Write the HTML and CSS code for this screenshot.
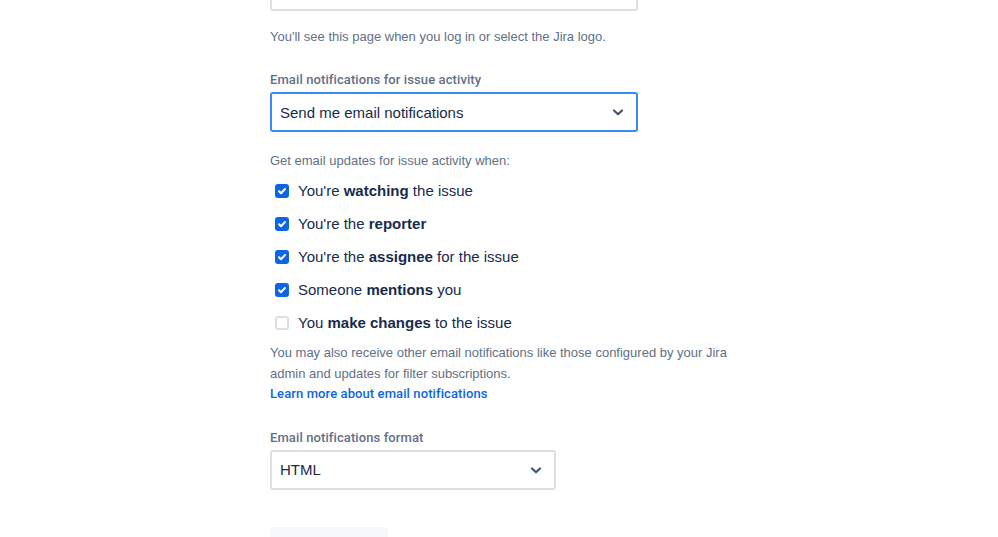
FILE: index.html
```html
<!DOCTYPE html>
<html>
<head>
<meta charset="utf-8">
<link rel="stylesheet" href="styles.css">
</head>
<body>
<div class="form">
  <div class="field-top"></div>
  <p class="helper first">You'll see this page when you log in or select the Jira logo.</p>

  <div class="label">Email notifications for issue activity</div>
  <div class="select select-focus">
    <span>Send me email notifications</span>
    <svg class="chev" width="24" height="24" viewBox="0 0 24 24"><path d="M8 10.5l4 3.8 4-3.8" fill="none" stroke="#44546F" stroke-width="2.2" stroke-linecap="round" stroke-linejoin="round"/></svg>
  </div>

  <p class="helper intro">Get email updates for issue activity when:</p>
  <ul class="checks">
    <li><span class="box on"><svg width="14" height="14" viewBox="0 0 14 14"><path d="M4 7.2l2 2 4-4.2" fill="none" stroke="#fff" stroke-width="2" stroke-linecap="round" stroke-linejoin="round"/></svg></span><span>You're <b>watching</b> the issue</span></li>
    <li><span class="box on"><svg width="14" height="14" viewBox="0 0 14 14"><path d="M4 7.2l2 2 4-4.2" fill="none" stroke="#fff" stroke-width="2" stroke-linecap="round" stroke-linejoin="round"/></svg></span><span>You're the <b>reporter</b></span></li>
    <li><span class="box on"><svg width="14" height="14" viewBox="0 0 14 14"><path d="M4 7.2l2 2 4-4.2" fill="none" stroke="#fff" stroke-width="2" stroke-linecap="round" stroke-linejoin="round"/></svg></span><span>You're the <b>assignee</b> for the issue</span></li>
    <li><span class="box on"><svg width="14" height="14" viewBox="0 0 14 14"><path d="M4 7.2l2 2 4-4.2" fill="none" stroke="#fff" stroke-width="2" stroke-linecap="round" stroke-linejoin="round"/></svg></span><span>Someone <b>mentions</b> you</span></li>
    <li><span class="box"></span><span>You <b>make changes</b> to the issue</span></li>
  </ul>

  <p class="helper note">You may also receive other email notifications like those configured by your Jira admin and updates for filter subscriptions.<br><a href="#">Learn more about email notifications</a></p>

  <div class="label label-2">Email notifications format</div>
  <div class="select select-small">
    <span>HTML</span>
    <svg class="chev" width="24" height="24" viewBox="0 0 24 24"><path d="M8 10.5l4 3.8 4-3.8" fill="none" stroke="#44546F" stroke-width="2.2" stroke-linecap="round" stroke-linejoin="round"/></svg>
  </div>

  <div class="button-stub"></div>
</div>
</body>
</html>
```
FILE: styles.css
```css
html, body {
  margin: 0;
  padding: 0;
  background: #fff;
  overflow: hidden;
}
body {
  font-family: "Liberation Sans", Arial, sans-serif;
  color: #172B4D;
}
.form {
  margin-left: 270px;
  width: 470px;
}
.field-top {
  width: 368px;
  height: 40px;
  margin-top: -29px;
  box-sizing: border-box;
  border: 2px solid #DCDFE4;
  border-radius: 3px;
  background: #fff;
}
.helper {
  margin: 15px 0 0;
  font-size: 13px;
  line-height: 20px;
  color: #626F86;
}
.helper.first {
  margin-top: 16px;
}
.label {
  margin-top: 23px;
  font-family: Roboto, "Liberation Sans", sans-serif;
  font-size: 13px;
  line-height: 20px;
  font-weight: 500;
  color: #626F86;
  letter-spacing: 0.1px;
}
.select {
  margin-top: 2px;
  width: 368px;
  height: 40px;
  box-sizing: border-box;
  border: 2px solid #DCDFE4;
  border-radius: 3px;
  display: flex;
  align-items: center;
  justify-content: space-between;
  padding: 0 6px 0 8px;
  font-size: 15px;
  color: #172B4D;
  background: #fff;
}
.select-focus {
  border-color: #388BFF;
}
.select-small {
  width: 286px;
}
.chev {
  display: block;
}
.intro {
  margin-top: 19px;
}
.checks {
  list-style: none;
  margin: 3px 0 0;
  padding: 0;
}
.checks li {
  display: flex;
  align-items: center;
  height: 33px;
  padding-left: 5px;
  font-size: 15px;
  color: #172B4D;
}
.checks b {
  font-weight: 700;
}
.box {
  width: 14px;
  height: 14px;
  box-sizing: border-box;
  border-radius: 3px;
  border: 2px solid #DCDFE4;
  background: #fff;
  margin-right: 9px;
  flex: none;
  display: flex;
  align-items: center;
  justify-content: center;
}
.box.on {
  background: #0C66E4;
  border: none;
}
.box svg {
  display: block;
}
.note {
  margin-top: 4px;
  line-height: 20.5px;
}
.note a {
  font-family: Roboto, "Liberation Sans", sans-serif;
  color: #0C66E4;
  text-decoration: none;
  font-weight: 500;
  letter-spacing: 0.1px;
}
.label-2 {
  margin-top: 23px;
}
.button-stub {
  margin-top: 37px;
  width: 118px;
  height: 40px;
  border-radius: 3px;
  background: #F7F8F9;
}
```
